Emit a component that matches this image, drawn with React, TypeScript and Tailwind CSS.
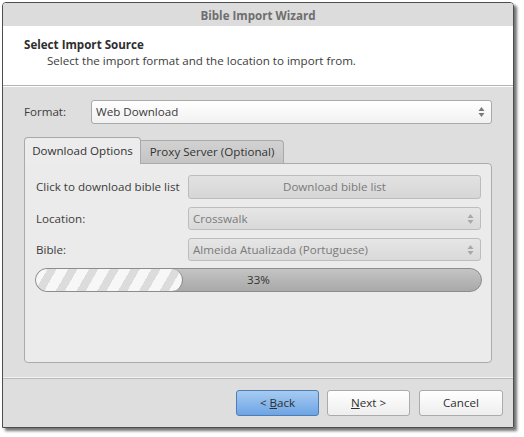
import React from 'react';

function Arrows({ color = '#8a8a8a' }: { color?: string }) {
  return (
    <svg width="7" height="12" viewBox="0 0 7 12" className="shrink-0">
      <path d="M3.5 1 L6.5 5 L0.5 5 Z" fill={color} />
      <path d="M3.5 11 L6.5 7 L0.5 7 Z" fill={color} />
    </svg>
  );
}

function Combo({ text, disabled }: { text: string; disabled?: boolean }) {
  return (
    <div
      className={
        disabled
          ? 'flex-1 h-[23px] flex items-center justify-between pl-[4px] pr-[6px] rounded-[3px] border border-[#bdbdbd] bg-gradient-to-b from-[#e6e6e6] to-[#d9d9d9] text-[#7a7a7a]'
          : 'flex-1 h-[24px] flex items-center justify-between pl-[4px] pr-[6px] rounded-[3px] border border-[#a9a9a9] bg-gradient-to-b from-white to-[#f1f1f1] text-[#3a3a3a]'
      }
    >
      <span>{text}</span>
      <Arrows color={disabled ? '#a8a8a8' : '#7a7a7a'} />
    </div>
  );
}

export default function App() {
  return (
    <div
      className="w-[524px] h-[437px] bg-white pt-[2px] pl-[2px] text-[11.6px] text-[#3c3c3c]"
      style={{ fontFamily: '"Open Sans", "Noto Sans", sans-serif' }}
    >
      <div className="w-[512px] h-[426px] flex flex-col border border-[#4d4d4d] rounded-t-[4px] shadow-[3px_3px_3px_rgba(0,0,0,0.55)] overflow-hidden">
        {/* title bar */}
        <div className="h-[23px] shrink-0 bg-[#dcdcdc] flex items-center justify-center pt-[2px] font-bold text-[#6e6e6e]">
          Bible Import Wizard
        </div>

        {/* header */}
        <div className="h-[60px] shrink-0 bg-white pl-[21px] pt-[11px] border-b border-[#b3b3b3]">
          <div className="font-bold text-[#2e2e2e] leading-[16px]">Select Import Source</div>
          <div className="pl-[23px] leading-[16px] text-[#3c3c3c]">
            Select the import format and the location to import from.
          </div>
        </div>

        {/* body */}
        <div className="flex-1 bg-[#dedede] border-t border-white px-[21px] pt-[13px] flex flex-col">
          <div className="flex items-center h-[24px]">
            <div className="w-[67px]">Format:</div>
            <Combo text="Web Download" />
          </div>

          <div className="mt-[13px] flex items-end">
            <div className="w-[117px] h-[27px] bg-[#ececec] border border-b-0 border-[#a9a9a9] rounded-t-[4px] flex items-center justify-center text-[#333] relative z-10 -mb-[1px]">
              Download Options
            </div>
            <div className="w-[143px] h-[23px] bg-gradient-to-b from-[#d2d2d2] to-[#c4c4c4] border border-l-0 border-b-0 border-[#a9a9a9] rounded-tr-[4px] flex items-center justify-center text-[#333]">
              Proxy Server (Optional)
            </div>
          </div>

          <div className="h-[200px] bg-[#ebebeb] border border-[#ababab] rounded-b-[4px] rounded-tr-[4px] pl-[11px] pr-[10px] pt-[11px] flex flex-col gap-[8px]">
            <div className="flex items-center h-[24px]">
              <div className="w-[152px]">Click to download bible list</div>
              <div className="flex-1 h-[24px] rounded-[3px] border border-[#bcbcbc] bg-gradient-to-b from-[#e2e2e2] to-[#d6d6d6] flex items-center justify-center text-[#7a7a7a]">
                Download bible list
              </div>
            </div>
            <div className="flex items-center h-[23px]">
              <div className="w-[152px]">Location:</div>
              <Combo text="Crosswalk" disabled />
            </div>
            <div className="flex items-center h-[23px]">
              <div className="w-[152px]">Bible:</div>
              <Combo text="Almeida Atualizada (Portuguese)" disabled />
            </div>
            <div className="-ml-[1px] -mt-[1px] h-[24px] w-[447px] rounded-full border border-[#8c8c8c] bg-gradient-to-b from-[#c4c4c4] to-[#a9a9a9] relative overflow-hidden">
              <div className="absolute left-0 top-0 bottom-0 w-[147px] rounded-full border-r border-[#8c8c8c] bg-[repeating-linear-gradient(120deg,#f7f7f7_0px,#f7f7f7_10px,#dcdcdc_10px,#dcdcdc_18px)]" />
              <div className="absolute inset-0 flex items-center justify-center text-[#333]">33%</div>
            </div>
          </div>

          <div className="flex-1" />
        </div>

        {/* footer */}
        <div className="h-[50px] shrink-0 bg-[#dedede] border-t border-[#f2f2f2] shadow-[inset_0_1px_0_#b9b9b9] flex items-start justify-end gap-[8px] pr-[10px] pt-[12px]">
          <div className="w-[83px] h-[26px] rounded-[3px] border border-[#4f7db3] bg-gradient-to-b from-[#a6cbf2] to-[#6ea4e4] flex items-center justify-center text-[#2f2f2f]">
            &lt; <span className="underline ml-[3px]">B</span>ack
          </div>
          <div className="w-[83px] h-[26px] rounded-[3px] border border-[#ababab] bg-gradient-to-b from-white to-[#eeeeee] flex items-center justify-center text-[#2f2f2f]">
            <span className="underline">N</span>ext &gt;
          </div>
          <div className="ml-[1px] w-[84px] h-[26px] rounded-[3px] border border-[#ababab] bg-gradient-to-b from-white to-[#eeeeee] flex items-center justify-center text-[#2f2f2f]">
            Cancel
          </div>
        </div>
      </div>
    </div>
  );
}
